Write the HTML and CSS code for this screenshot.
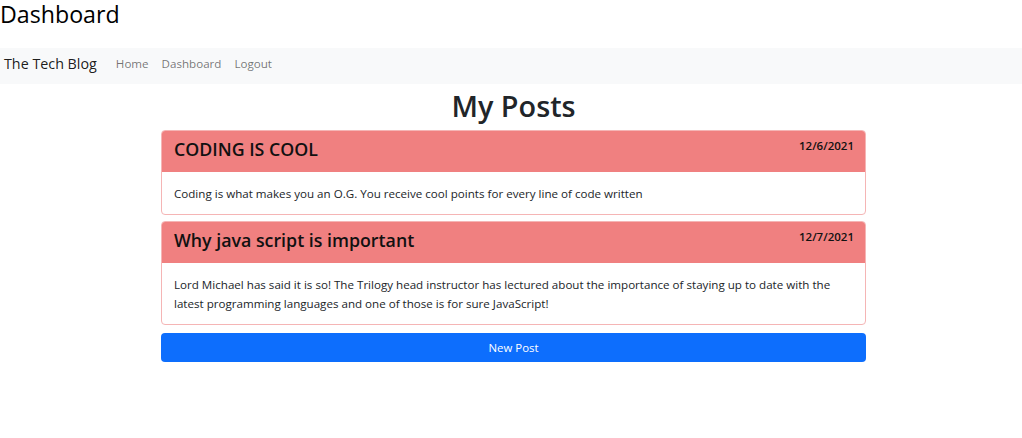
FILE: index.html
```html
<!DOCTYPE html>
<html>
<head>
<meta charset="utf-8">
<link rel="stylesheet" href="styles.css">
</head>
<body>
<div class="page-title">Dashboard</div>
<nav class="navbar">
  <span class="brand">The Tech Blog</span>
  <a class="nav-link" href="#">Home</a>
  <a class="nav-link" href="#">Dashboard</a>
  <a class="nav-link" href="#">Logout</a>
</nav>
<main class="main">
  <div class="container">
    <h1 class="heading">My Posts</h1>
    <div class="card">
      <div class="card-header">
        <h2 class="card-title">CODING IS COOL</h2>
        <span class="card-date">12/6/2021</span>
      </div>
      <div class="card-body">Coding is what makes you an O.G. You receive cool points for every line of code written</div>
    </div>
    <div class="card">
      <div class="card-header">
        <h2 class="card-title">Why java script is important</h2>
        <span class="card-date">12/7/2021</span>
      </div>
      <div class="card-body">Lord Michael has said it is so! The Trilogy head instructor has lectured about the importance of staying up to date with the latest programming languages and one of those is for sure JavaScript!</div>
    </div>
    <button class="btn-new">New Post</button>
  </div>
</main>
</body>
</html>
```
FILE: styles.css
```css
* { box-sizing: border-box; }
body {
  margin: 0;
  font-family: "Open Sans", "Noto Sans", sans-serif;
  color: #212529;
  background: #fff;
}
.page-title {
  font-size: 23.2px;
  line-height: 29px;
  color: #000;
  height: 48px;
}
.navbar {
  display: flex;
  align-items: center;
  height: 36px;
  background: #f8f9fa;
  padding: 0 4px 6px;
}
.brand {
  font-size: 14.3px;
  color: rgba(0,0,0,.9);
  margin-right: 19px;
}
.nav-link {
  font-size: 11.6px;
  color: rgba(0,0,0,.55);
  text-decoration: none;
  margin-right: 13px;
}
.main {
  padding-left: 5px;
}
.container {
  width: 705px;
  margin: 0 auto;
  display: flex;
  flex-direction: column;
}
.heading {
  margin: 4px 0 6px;
  text-align: center;
  font-size: 28.8px;
  line-height: 36px;
  font-weight: 600;
}
.card {
  border: 1px solid #f5b5b5;
  border-radius: 4px;
  overflow: hidden;
  margin-bottom: 7px;
}
.card + .card {
  margin-top: -1px;
}
.card-header {
  background: #f08080;
  height: 41px;
  display: flex;
  justify-content: space-between;
  align-items: flex-start;
  padding: 0 11px 0 12px;
}
.card-title {
  margin: 0;
  font-size: 17.8px;
  font-weight: 600;
  line-height: 37px;
  color: #111;
}
.card-date {
  font-size: 11.5px;
  font-weight: 600;
  color: #111;
  margin-top: 7px;
}
.card-body {
  padding: 12px 12px 11px;
  font-size: 11.6px;
  line-height: 19px;
  color: #212529;
}
.btn-new {
  height: 29px;
  border: none;
  border-radius: 4px;
  background: #0d6efd;
  color: #fff;
  font-family: inherit;
  font-size: 11.4px;
  margin-top: 1px;
}
```
